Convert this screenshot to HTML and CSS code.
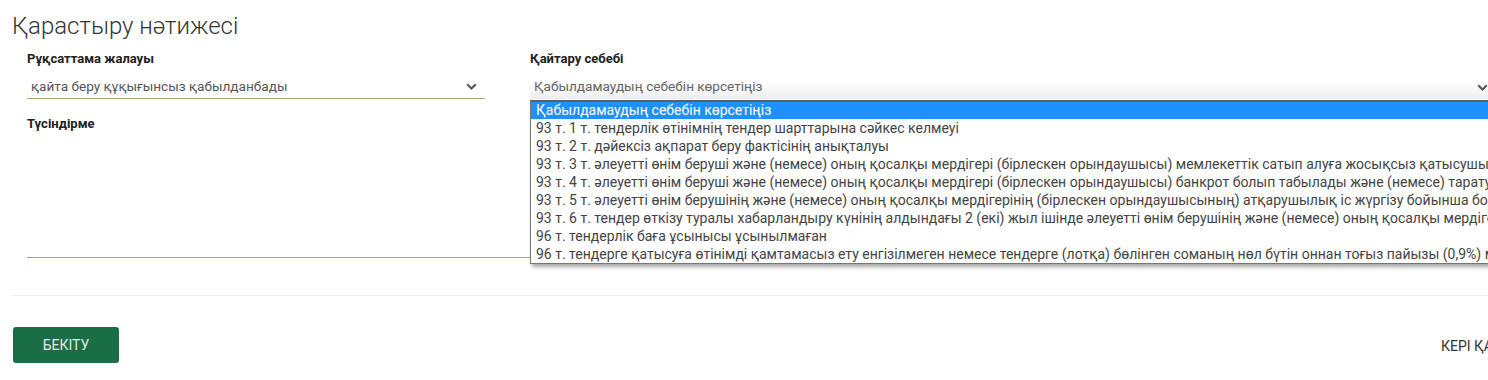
FILE: index.html
```html
<!DOCTYPE html>
<html lang="kk">
<head>
<meta charset="utf-8">
<title>Қарастыру нәтижесі</title>
<link rel="stylesheet" href="styles.css">
</head>
<body>
<div class="page">
  <h1 class="title">Қарастыру нәтижесі</h1>
  <div class="form-row">
    <div class="field field-flag">
      <div class="label">Рұқсаттама жалауы</div>
      <div class="select">
        <span class="select-value">қайта беру құқығынсыз қабылданбады</span>
        <svg class="chev" width="11" height="7" viewBox="0 0 11 7"><path d="M1.2 1.2l4.3 4.3 4.3-4.3" fill="none" stroke="#555" stroke-width="2"/></svg>
      </div>
    </div>
    <div class="field field-reason">
      <div class="label">Қайтару себебі</div>
      <div class="select select-open">
        <span class="select-value placeholder">Қабылдамаудың себебін көрсетіңіз</span>
        <svg class="chev" width="11" height="7" viewBox="0 0 11 7"><path d="M1.2 1.2l4.3 4.3 4.3-4.3" fill="none" stroke="#555" stroke-width="2"/></svg>
      </div>
      <ul class="dropdown">
        <li class="opt active">Қабылдамаудың себебін көрсетіңіз</li>
        <li class="opt">93 т. 1 т. тендерлік өтінімнің тендер шарттарына сәйкес келмеуі</li>
        <li class="opt">93 т. 2 т. дәйексіз ақпарат беру фактісінің анықталуы</li>
        <li class="opt">93 т. 3 т. әлеуетті өнім беруші және (немесе) оның қосалқы мердігері (бірлескен орындаушысы) мемлекеттік сатып алуға жосықсыз қатысушылар тізіліміне енгізілген</li>
        <li class="opt">93 т. 4 т. әлеуетті өнім беруші және (немесе) оның қосалқы мердігері (бірлескен орындаушысы) банкрот болып табылады және (немесе) тарату рәсімінде</li>
        <li class="opt">93 т. 5 т. әлеуетті өнім берушінің және (немесе) оның қосалқы мердігерінің (бірлескен орындаушысының) атқарушылық іс жүргізу бойынша борышы бар</li>
        <li class="opt">93 т. 6 т. тендер өткізу туралы хабарландыру күнінің алдындағы 2 (екі) жыл ішінде әлеуетті өнім берушінің және (немесе) оның қосалқы мердігерінің</li>
        <li class="opt">96 т. тендерлік баға ұсынысы ұсынылмаған</li>
        <li class="opt">96 т. тендерге қатысуға өтінімді қамтамасыз ету енгізілмеген немесе тендерге (лотқа) бөлінген соманың нөл бүтін оннан тоғыз пайызы (0,9%) мөлшерінен аз</li>
      </ul>
    </div>
  </div>
  <div class="field field-note">
    <div class="label">Түсіндірме</div>
    <div class="textarea"></div>
  </div>
  <hr class="divider">
  <div class="actions">
    <button class="btn-confirm">БЕКІТУ</button>
    <button class="btn-back">КЕРІ ҚАЙТАРУ</button>
  </div>
</div>
</body>
</html>
```

FILE: styles.css
```css
html, body {
  margin: 0;
  padding: 0;
  background: #fff;
  overflow: hidden;
}
body {
  font-family: Roboto, "Noto Sans", "Liberation Sans", sans-serif;
  color: #333;
}
.page {
  width: 1573px;
  padding: 0 0 0 12px;
  box-sizing: border-box;
}
.title {
  margin: 0;
  padding-top: 10px;
  font-size: 24px;
  line-height: 32px;
  font-weight: 300;
  color: #333;
}
.form-row {
  display: flex;
  margin-top: 9px;
}
.field {
  position: relative;
}
.field-flag {
  margin-left: 15px;
  width: 458px;
}
.field-reason {
  margin-left: 45px;
  width: 962px;
}
.label {
  font-size: 13px;
  font-weight: 700;
  line-height: 16px;
  color: #222;
}
.select {
  display: flex;
  align-items: center;
  justify-content: space-between;
  height: 26px;
  margin-top: 6px;
  border-bottom: 1px solid #b3aa7c;
  box-sizing: border-box;
  padding: 0 8px 0 4px;
  font-size: 13.6px;
  color: #555;
}
.select-open {
  border-bottom: none;
  background: linear-gradient(#ffffff 30%, #eeeeee);
  padding-right: 4px;
}
.placeholder {
  color: #666;
}
.chev {
  display: block;
  margin-top: 2px;
}
.dropdown {
  position: absolute;
  left: 0;
  top: 49px;
  width: 1000px;
  margin: 0;
  padding: 0;
  list-style: none;
  background: #fff;
  border: 1px solid #767676;
  border-top: 2px solid #5f5f5f;
  box-shadow: 2px 3px 4px rgba(0, 0, 0, 0.35);
  z-index: 5;
}
.opt {
  height: 18px;
  line-height: 18px;
  padding: 0 5px;
  font-size: 14px;
  color: #444;
  white-space: nowrap;
  overflow: hidden;
}
.opt.active {
  background: #1e90ff;
  color: #fff;
  height: 17px;
  line-height: 17px;
}
.field-note {
  margin: 17px 0 0 15px;
}
.textarea {
  height: 125px;
  border-bottom: 1px solid #aaa47c;
}
.divider {
  margin: 37px 0 0 0;
  border: none;
  border-top: 1px solid #ececec;
}
.actions {
  display: flex;
  justify-content: space-between;
  align-items: center;
  margin-top: 31px;
}
.btn-confirm {
  margin-left: 1px;
  width: 106px;
  height: 36px;
  border: none;
  border-radius: 3px;
  background: #1a6e45;
  color: #e6e6e6;
  font-family: Roboto, "Noto Sans", sans-serif;
  font-size: 14px;
  padding: 0;
}
.btn-back {
  width: 132px;
  text-align: left;
  border: none;
  background: none;
  color: #333;
  font-family: Roboto, "Noto Sans", sans-serif;
  font-size: 14px;
  padding: 0;
  margin-top: 2px;
}
```
